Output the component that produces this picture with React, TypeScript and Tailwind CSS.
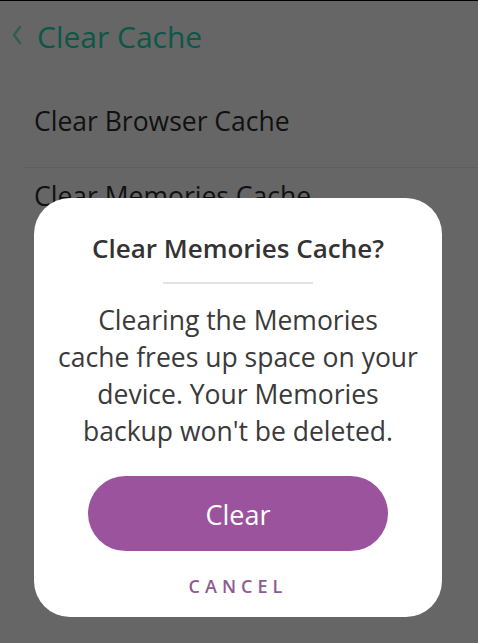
export default function App() {
  return (
    <div
      className="relative h-[643px] w-[478px] overflow-hidden bg-[#666666]"
      style={{ fontFamily: "'Open Sans', 'Noto Sans', sans-serif" }}
    >
      <div className="h-[1px] bg-black" />
      <div className="flex h-[70px] items-center gap-[13px] pl-[10px]">
        <svg width="14" height="22" viewBox="0 0 14 22" className="mt-[-2px]">
          <path d="M10 3 L4 11 L10 19" fill="none" stroke="#2f5f52" strokeWidth="2.4" strokeLinecap="round" strokeLinejoin="round" />
        </svg>
        <span className="text-[30px] text-[#0d5746]">Clear Cache</span>
      </div>
      <div className="ml-[24px] flex flex-col">
        <div className="flex h-[97px] items-center border-b border-[#5f5f5f] pl-[10px] pt-[6px]">
          <span className="text-[26.5px] text-[#111111]">Clear Browser Cache</span>
        </div>
        <div className="flex h-[58px] items-center pl-[10px]">
          <span className="text-[26.5px] text-[#111111]">Clear Memories Cache</span>
        </div>
      </div>

      <div className="absolute left-[34px] top-[198px] flex w-[408px] flex-col items-center rounded-[36px] bg-white pb-[21px] pt-[35px]">
        <h2 className="text-[26px] font-semibold leading-[30px] text-[#333333]">Clear Memories Cache?</h2>
        <div className="mt-[19px] h-[2px] w-[150px] bg-[#e3e3e3]" />
        <p className="mt-[18px] px-[6px] text-center text-[26.5px] leading-[37px] text-[#3a3a3a]">
          Clearing the Memories
          <br />
          cache frees up space on your
          <br />
          device. Your Memories
          <br />
          backup won't be deleted.
        </p>
        <button className="mt-[26px] flex h-[75px] w-[300px] items-center justify-center rounded-full bg-[#9b539e] pt-[3px] text-[27px] text-white">
          Clear
        </button>
        <button className="mt-[25px] text-[18px] font-semibold leading-[20px] tracking-[0.28em] text-[#8f5b96]">
          CANCEL
        </button>
      </div>
    </div>
  );
}
